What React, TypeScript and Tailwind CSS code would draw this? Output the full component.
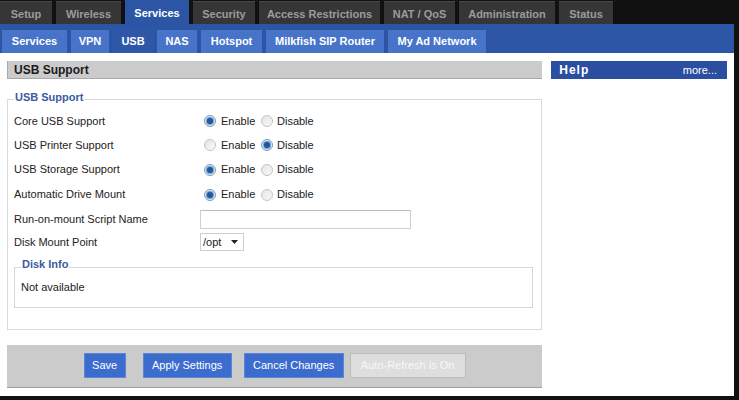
import React from "react";

const topTabs = [
  { label: "Setup", w: "w-[52px]" },
  { label: "Wireless", w: "w-[65px]" },
  { label: "Services", w: "w-[64px]", active: true },
  { label: "Security", w: "w-[62px]" },
  { label: "Access Restrictions", w: "w-[121px]" },
  { label: "NAT / QoS", w: "w-[71px]" },
  { label: "Administration", w: "w-[96px]" },
  { label: "Status", w: "w-[54px]" },
];

const subTabs = [
  { label: "Services", w: "w-[65px]" },
  { label: "VPN", w: "w-[38px]" },
  { label: "USB", w: "w-[40px]", active: true },
  { label: "NAS", w: "w-[40px]" },
  { label: "Hotspot", w: "w-[61px]" },
  { label: "Milkfish SIP Router", w: "w-[118px]" },
  { label: "My Ad Network", w: "w-[98px]" },
];

const Radio = ({ checked }: { checked?: boolean }) => (
  <span
    className={`flex h-[12px] w-[12px] items-center justify-center rounded-full border ${
      checked
        ? "border-[#7d9bbd] bg-[#dfe8f2]"
        : "border-[#c4c4c4] bg-gradient-to-br from-[#e4e4e4] to-[#fafafa]"
    }`}
  >
    {checked && (
      <span className="h-[6px] w-[6px] rounded-full bg-[#1d5a9c] shadow-[0_0_0_1px_#6f9fd0]" />
    )}
  </span>
);

const EnableDisable = ({ enabled }: { enabled: boolean }) => (
  <div className="flex items-center">
    <Radio checked={enabled} />
    <span className="ml-[5px] w-[40px]">Enable</span>
    <Radio checked={!enabled} />
    <span className="ml-[4px]">Disable</span>
  </div>
);

const rows = [
  { label: "Core USB Support", enabled: true, h: "h-[24px]" },
  { label: "USB Printer Support", enabled: false, h: "h-[24px]" },
  { label: "USB Storage Support", enabled: true, h: "h-[25px]" },
  { label: "Automatic Drive Mount", enabled: true, h: "h-[25px]" },
];

export default function App() {
  return (
    <div className="flex h-[400px] w-[739px] flex-col bg-[#111111] pb-[4px] pr-[5px] font-['Liberation_Sans',Arial,sans-serif] text-[11px] text-[#222]">
      {/* top tabs */}
      <div className="flex h-[24px] items-end gap-[4px]">
        {topTabs.map((t) => (
          <div
            key={t.label}
            className={`flex h-[23px] items-center justify-center pt-[2px] font-bold ${t.w} ${
              t.active
                ? "h-[24px] bg-[#2d55a6] text-white"
                : "border-t border-[#474747] bg-[#363636] text-[#9c9c9c]"
            }`}
          >
            {t.label}
          </div>
        ))}
      </div>

      <div className="flex flex-1 flex-col bg-white">
        {/* sub tabs */}
        <div className="flex h-[29px] items-end gap-[4px] bg-[#2d55a6] pl-[2px]">
          {subTabs.map((t) => (
            <div
              key={t.label}
              className={`flex h-[23px] items-center justify-center font-bold text-white ${t.w} ${
                t.active ? "bg-[#2f57a8]" : "bg-[#4774c9]"
              }`}
            >
              {t.label}
            </div>
          ))}
        </div>

        <div className="flex gap-[9px] px-[7px] pt-[8px]">
          {/* main column */}
          <div className="flex w-[536px] flex-col">
            <div className="flex h-[18px] items-center border-b border-l border-[#a9a9a9] bg-[#cbcbcb] pl-[6px] text-[12px] font-bold text-[#1a1a1a]">
              USB Support
            </div>

            <fieldset className="mt-[11px] border border-[#dadada] px-[6px] pb-[21px]">
              <legend className="px-[1px] pb-[5px] text-[11px] font-bold leading-[14px] text-[#3b5b9c]">
                USB Support
              </legend>

              {rows.map((r) => (
                <div key={r.label} className={`flex items-center ${r.h}`}>
                  <div className="w-[190px]">{r.label}</div>
                  <EnableDisable enabled={r.enabled} />
                </div>
              ))}

              <div className="flex h-[24px] items-center">
                <div className="w-[186px]">Run-on-mount Script Name</div>
                <input
                  type="text"
                  className="h-[19px] w-[211px] border border-[#cfcfcf] border-t-[#bdbdbd] bg-white outline-none"
                />
              </div>

              <div className="flex h-[22px] items-center">
                <div className="w-[186px]">Disk Mount Point</div>
                <div className="flex h-[18px] w-[44px] items-center justify-between border border-[#d0d0d0] bg-white pl-[2px] pr-[5px]">
                  <span>/opt</span>
                  <svg width="7" height="4" viewBox="0 0 7 4">
                    <path d="M0 0h7L3.5 4z" fill="#222" />
                  </svg>
                </div>
              </div>

              <fieldset className="mr-[2px] mt-[4px] border border-[#d6d6d6] px-[6px] pb-[14px]">
                <legend className="px-[1px] pb-[6px] text-[11px] font-bold leading-[14px] text-[#3b5b9c]">
                  Disk Info
                </legend>
                <div className="pt-[4px] leading-[12px]">Not available</div>
              </fieldset>
            </fieldset>

            {/* button bar */}
            <div className="mt-[15px] flex h-[43px] items-start justify-center border-b border-[#9f9f9f] bg-[#cbcbcb] pt-[8px] text-[11px]">
              <button className="h-[25px] w-[42px] border border-[#5a86d6] bg-[#3c6dce] text-white">
                Save
              </button>
              <button className="ml-[17px] h-[25px] w-[89px] border border-[#5a86d6] bg-[#3c6dce] text-white">
                Apply Settings
              </button>
              <button className="ml-[12px] h-[25px] w-[100px] border border-[#5a86d6] bg-[#3c6dce] text-white">
                Cancel Changes
              </button>
              <button className="ml-[6px] h-[25px] w-[116px] border border-[#bcbcbc] bg-[#dedede] text-[#f7f7f7]">
                Auto-Refresh is On
              </button>
            </div>
          </div>

          {/* help column */}
          <div className="w-[176px]">
            <div className="flex h-[18px] items-center justify-between bg-[#2b4ea0] pl-[8px] pr-[10px] text-white">
              <span className="text-[12px] font-bold tracking-[1px]">Help</span>
              <span>more...</span>
            </div>
          </div>
        </div>
      </div>
    </div>
  );
}
